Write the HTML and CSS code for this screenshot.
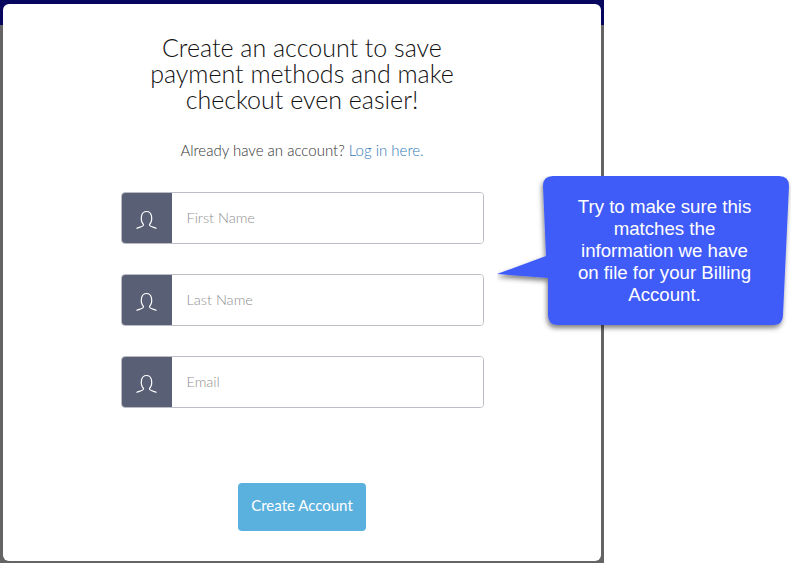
FILE: index.html
```html
<!DOCTYPE html>
<html lang="en">
<head>
    <meta charset="UTF-8">
    <title>Create Account</title>
    <link rel="stylesheet" href="styles.css">
</head>
<body>
    <div class="backdrop">
        <div class="top-band"></div>
        <div class="modal">
            <h2 class="modal-title">Create an account to save<br>payment methods and make<br>checkout even easier!</h2>
            <p class="login-line">Already have an account? <a href="#">Log in here.</a></p>
            <form class="signup-form">
                <div class="field">
                    <span class="field-icon">
                        <svg width="24" height="22" viewBox="0 0 24 22"><path d="M8.500 14.500 C5 10.500 5.500 1.500 11.500 1.500 C17.500 1.500 18 10.500 14.500 14.500 C14 16.500 18 17 21.500 18.500 M8.500 14.500 C9 16.500 5 17 1.500 18.500" fill="none" stroke="#fff" stroke-width="1.200"/></svg>
                    </span>
                    <input class="field-input" type="text" placeholder="First Name">
                </div>
                <div class="field">
                    <span class="field-icon">
                        <svg width="24" height="22" viewBox="0 0 24 22"><path d="M8.500 14.500 C5 10.500 5.500 1.500 11.500 1.500 C17.500 1.500 18 10.500 14.500 14.500 C14 16.500 18 17 21.500 18.500 M8.500 14.500 C9 16.500 5 17 1.500 18.500" fill="none" stroke="#fff" stroke-width="1.200"/></svg>
                    </span>
                    <input class="field-input" type="text" placeholder="Last Name">
                </div>
                <div class="field">
                    <span class="field-icon">
                        <svg width="24" height="22" viewBox="0 0 24 22"><path d="M8.500 14.500 C5 10.500 5.500 1.500 11.500 1.500 C17.500 1.500 18 10.500 14.500 14.500 C14 16.500 18 17 21.500 18.500 M8.500 14.500 C9 16.500 5 17 1.500 18.500" fill="none" stroke="#fff" stroke-width="1.200"/></svg>
                    </span>
                    <input class="field-input" type="email" placeholder="Email">
                </div>
                <button class="create-button" type="submit">Create Account</button>
            </form>
        </div>
    </div>

    <!-- Callout over the page -->
    <div class="callout">
        <svg class="callout-shape" width="304" height="162" viewBox="0 0 304 162">
            <defs>
                <filter id="callout-shadow" x="-5%" y="-5%" width="112%" height="115%">
                    <feDropShadow dx="-1" dy="3" stdDeviation="2.500" flood-color="#000" flood-opacity="0.5"/>
                </filter>
            </defs>
            <path d="M56 0 H282 Q292 0 292 10 L286 139 Q286 149 276 149 H61 Q51 149 51 139 L51 102 L0 98 L49 80 L46 10 Q46 0 56 0 Z" fill="#3f5cf8" filter="url(#callout-shadow)"/>
        </svg>
        <p class="callout-text">Try to make sure this<br>matches the<br>information we have<br>on file for your Billing<br>Account.</p>
    </div>
</body>
</html>
```

FILE: styles.css
```css
* {
    box-sizing: border-box;
}

html, body {
    height: 100%;
}

body {
    margin: 0;
    background-color: #fff;
    font-family: Lato, sans-serif;
    overflow: hidden;
}

.backdrop {
    position: relative;
    width: 604px;
    height: 563px;
    padding: 4px 3px 2px 3px;
    background-color: #646464;
}

.top-band {
    position: absolute;
    top: 0;
    left: 0;
    width: 100%;
    height: 25px;
    background-color: #06065f;
}

.modal {
    position: relative;
    height: 100%;
    background-color: #fff;
    border-radius: 6px;
    text-align: center;
}

.modal-title {
    margin: 0;
    padding-top: 30px;
    color: #111;
    font-size: 25px;
    font-weight: 300;
    line-height: 26px;
}

.login-line {
    margin: 28px 0 0 0;
    color: #333;
    font-size: 15px;
    font-weight: 300;
    line-height: 20px;
}

.login-line a {
    color: #337ab7;
    text-decoration: none;
}

.signup-form {
    display: flex;
    flex-direction: column;
    align-items: center;
    margin-top: 32px;
}

.field {
    display: flex;
    width: 363px;
    height: 52px;
    margin-bottom: 30px;
    border: 1px solid #bcbcc4;
    border-radius: 4px;
    overflow: hidden;
}

.field-icon {
    display: flex;
    flex: 0 0 50px;
    align-items: center;
    justify-content: center;
    padding-top: 5px;
    background-color: #595f75;
}

.field-input {
    flex: 1;
    padding: 0 15px 2px 15px;
    border: none;
    outline: none;
    font-family: Lato, sans-serif;
    font-size: 14.500px;
    font-weight: 300;
    color: #333;
}

.field-input::placeholder {
    color: #8f8f8f;
}

.create-button {
    width: 128px;
    height: 48px;
    margin-top: 45px;
    padding: 0 0 4px 0;
    background-color: #5bb1de;
    border: none;
    border-radius: 4px;
    color: #fff;
    font-family: Lato, sans-serif;
    font-size: 15px;
    cursor: pointer;
}

.callout {
    position: absolute;
    top: 176px;
    left: 497px;
    width: 304px;
    height: 162px;
}

.callout-shape {
    position: absolute;
    top: 0;
    left: 0;
}

.callout-text {
    position: absolute;
    top: 20px;
    left: 57px;
    width: 221px;
    margin: 0;
    color: #fff;
    font-family: "Liberation Sans", Arial, sans-serif;
    font-size: 18.670px;
    line-height: 22px;
    text-align: center;
}
```
